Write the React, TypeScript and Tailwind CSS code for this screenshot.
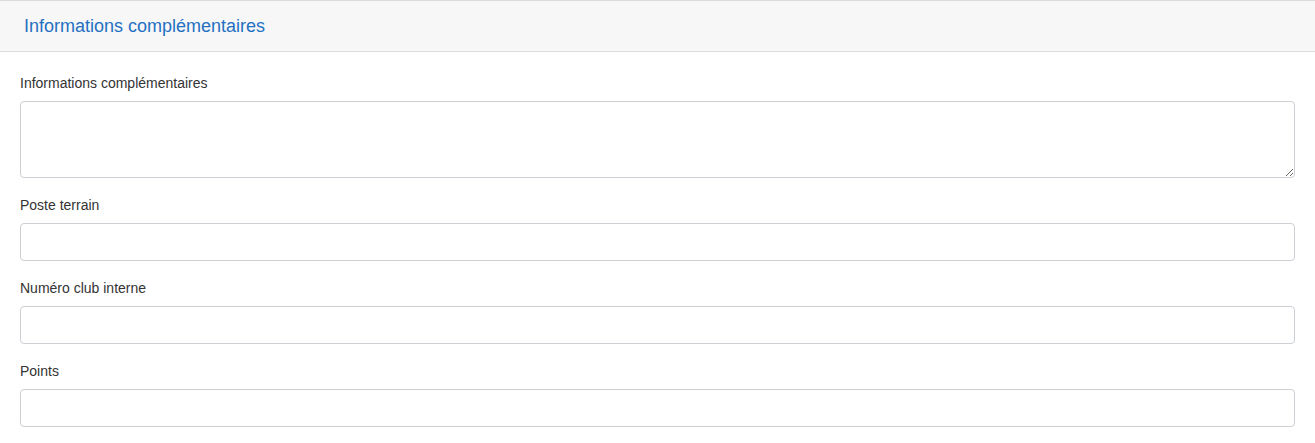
import React from "react";

const fields = ["Poste terrain", "Numéro club interne", "Points"];

const App = () => {
  return (
    <div className="min-h-screen w-full bg-white font-['Liberation_Sans',Arial,sans-serif]">
      {/* Panel heading */}
      <div className="flex h-[52px] items-center border-y border-[#dcdcdc] bg-[#f7f7f7] px-6">
        <h2 className="text-[18px] leading-6 text-[#2470c2]">
          Informations complémentaires
        </h2>
      </div>

      {/* Form body */}
      <div className="px-5 pt-[21px]">
        <div className="mb-[17px]">
          <label className="mb-2 block text-[14px] leading-5 text-[#333]">
            Informations complémentaires
          </label>
          <textarea className="block h-[77px] w-full rounded border border-[#ccd0d5] bg-white px-3 py-1.5 text-[14px] outline-none" />
        </div>

        {fields.map((f) => (
          <div key={f} className="mb-[17px]">
            <label className="mb-2 block text-[14px] leading-5 text-[#333]">
              {f}
            </label>
            <input
              type="text"
              className="block h-[38px] w-full rounded border border-[#ccd0d5] bg-white px-3 text-[14px] outline-none"
            />
          </div>
        ))}
      </div>
    </div>
  );
};

export default App;
